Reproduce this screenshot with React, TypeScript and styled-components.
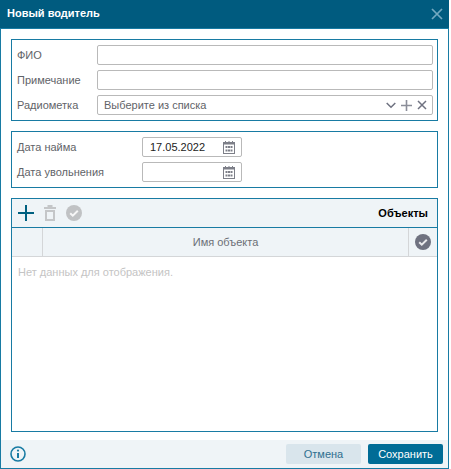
import React from "react";
import styled, { createGlobalStyle } from "styled-components";

const Global = createGlobalStyle`
  html, body {
    margin: 0;
    padding: 0;
    background: #fff;
  }
  body {
    font-family: "Liberation Sans", Arial, sans-serif;
    font-size: 11px;
  }
`;

const CalendarIcon = () => (
  <svg width="12" height="13" viewBox="0 0 12 13" fill="none">
    <rect x="0.5" y="1.5" width="11" height="11" stroke="#7d7f88" fill="#fff" />
    <rect x="0.5" y="1" width="11" height="2.5" fill="#7d7f88" />
    <path d="M2.5 0v2M6 0v2M9.5 0v2" stroke="#7d7f88" />
    <path d="M2.5 5h2v2h-2zM5 5h2v2H5zM7.5 5h2v2h-2zM2.5 8.5h2v2h-2zM5 8.5h2v2H5zM7.5 8.5h2v2h-2z" fill="#7d7f88" />
  </svg>
);

const CheckCircle = ({ color }: { color: string }) => (
  <svg width="16" height="16" viewBox="0 0 16 16">
    <circle cx="8" cy="8" r="8" fill={color} />
    <path d="M4.2 8.2l2.6 2.5 5-5" fill="none" stroke="#fff" strokeOpacity="0.85" strokeWidth="2" />
  </svg>
);

export default function App() {
  return (
    <>
      <Global />
      <Dialog>
        <Header>
          <Title>Новый водитель</Title>
          <CloseButton>
            <svg width="12" height="12" viewBox="0 0 12 12">
              <path d="M1 1l10 10M11 1L1 11" stroke="#73a9c0" strokeWidth="1.7" />
            </svg>
          </CloseButton>
        </Header>
        <Body>
          <Section>
            <Row>
              <Label $width={80}>ФИО</Label>
              <Input />
            </Row>
            <Row>
              <Label $width={80}>Примечание</Label>
              <Input />
            </Row>
            <Row>
              <Label $width={80}>Радиометка</Label>
              <Input>
                <Placeholder>Выберите из списка</Placeholder>
                <SelectIcons>
                  <svg width="10" height="10" viewBox="0 0 10 10">
                    <path d="M0.7 3l4.3 4.3L9.3 3" fill="none" stroke="#6f7280" strokeWidth="1.5" />
                  </svg>
                  <svg width="11" height="11" viewBox="0 0 11 11">
                    <path d="M5.5 0v11M0 5.5h11" stroke="#8b8e99" strokeWidth="1.6" />
                  </svg>
                  <svg width="10" height="10" viewBox="0 0 10 10">
                    <path d="M1 1l8 8M9 1l-8 8" stroke="#6f7280" strokeWidth="1.5" />
                  </svg>
                </SelectIcons>
              </Input>
            </Row>
          </Section>
          <Section>
            <Row>
              <Label $width={125}>Дата найма</Label>
              <DateInput>
                <DateValue>17.05.2022</DateValue>
                <CalendarIcon />
              </DateInput>
            </Row>
            <Row>
              <Label $width={125}>Дата увольнения</Label>
              <DateInput>
                <DateValue />
                <CalendarIcon />
              </DateInput>
            </Row>
          </Section>
          <TableSection>
            <Toolbar>
              <ToolIcons>
                <svg width="16" height="16" viewBox="0 0 16 16">
                  <path d="M8 0v16M0 8h16" stroke="#006080" strokeWidth="2" />
                </svg>
                <svg width="12" height="16" viewBox="0 0 12 16">
                  <path d="M3.5 1h5M0 3h12" stroke="#c4c6c8" strokeWidth="2" fill="none" />
                  <path d="M2 6h8v9H2z" stroke="#c4c6c8" strokeWidth="2" fill="none" />
                </svg>
                <CheckCircle color="#c0c2c4" />
              </ToolIcons>
              <ToolbarTitle>Объекты</ToolbarTitle>
            </Toolbar>
            <TableHead>
              <HeadCell $width={30} />
              <HeadTitle>Имя объекта</HeadTitle>
              <HeadCheck>
                <CheckCircle color="#6f7280" />
              </HeadCheck>
            </TableHead>
            <EmptyText>Нет данных для отображения.</EmptyText>
          </TableSection>
        </Body>
        <Footer>
          <svg width="16" height="16" viewBox="0 0 16 16">
            <circle cx="8" cy="8" r="7" fill="none" stroke="#187ba3" strokeWidth="1.6" />
            <path d="M8 7v5" stroke="#187ba3" strokeWidth="2" />
            <circle cx="8" cy="4.6" r="1.1" fill="#187ba3" />
          </svg>
          <Buttons>
            <CancelButton>Отмена</CancelButton>
            <SaveButton>Сохранить</SaveButton>
          </Buttons>
        </Footer>
      </Dialog>
    </>
  );
}

const Dialog = styled.div`
  width: 449px;
  height: 469px;
  box-sizing: border-box;
  border: 1px solid #187ba3;
  border-top: none;
  display: flex;
  flex-direction: column;
  background: #fff;
`;

const Header = styled.div`
  height: 29px;
  flex: none;
  box-sizing: border-box;
  margin: 0 -1px;
  padding: 0 6px 0 7px;
  background: #005b7f;
  border-bottom: 1px solid #187ba3;
  display: flex;
  align-items: center;
  justify-content: space-between;
`;

const Title = styled.div`
  color: #fff;
  font-size: 11px;
  font-weight: bold;
  margin-bottom: 2px;
`;

const CloseButton = styled.div`
  display: flex;
`;

const Body = styled.div`
  flex: 1;
  min-height: 0;
  padding: 10px 10px 8px 10px;
  display: flex;
  flex-direction: column;
  gap: 10px;
`;

const Section = styled.div`
  border: 1px solid #187ba3;
  padding: 5px 4px 5px 5px;
  display: flex;
  flex-direction: column;
  gap: 5px;
`;

const Row = styled.div`
  display: flex;
  align-items: center;
  height: 20px;
`;

const Label = styled.div<{ $width: number }>`
  width: ${(p) => p.$width}px;
  flex: none;
  color: #5f6368;
  font-size: 11px;
`;

const Input = styled.div`
  flex: 1;
  height: 20px;
  box-sizing: border-box;
  border: 1px solid #b9b9b9;
  border-radius: 2px;
  padding: 0 5px 0 6px;
  display: flex;
  align-items: center;
  justify-content: space-between;
`;

const Placeholder = styled.span`
  color: #5f6368;
  font-size: 11px;
`;

const SelectIcons = styled.div`
  display: flex;
  align-items: center;
  gap: 5px;
`;

const DateInput = styled.div`
  width: 100px;
  height: 20px;
  box-sizing: border-box;
  border: 1px solid #b9b9b9;
  border-radius: 2px;
  padding: 0 6px 0 7px;
  display: flex;
  align-items: center;
  justify-content: space-between;
`;

const DateValue = styled.span`
  color: #222;
  font-size: 11px;
`;

const TableSection = styled.div`
  flex: 1;
  min-height: 0;
  border: 1px solid #187ba3;
  display: flex;
  flex-direction: column;
`;

const Toolbar = styled.div`
  height: 29px;
  flex: none;
  box-sizing: border-box;
  background: #eff4f7;
  border-bottom: 1px solid #187ba3;
  padding: 0 9px 0 6px;
  display: flex;
  align-items: center;
  justify-content: space-between;
`;

const ToolIcons = styled.div`
  display: flex;
  align-items: center;
  gap: 10px;
`;

const ToolbarTitle = styled.div`
  color: #000;
  font-size: 11px;
  font-weight: bold;
`;

const TableHead = styled.div`
  height: 29px;
  flex: none;
  box-sizing: border-box;
  background: #eff4f7;
  border-bottom: 1px solid #d4d6d8;
  display: flex;
`;

const HeadCell = styled.div<{ $width: number }>`
  width: ${(p) => p.$width}px;
  flex: none;
  border-right: 1px solid #d4d6d8;
`;

const HeadTitle = styled.div`
  flex: 1;
  color: #6b6f76;
  font-size: 11px;
  display: flex;
  align-items: center;
  justify-content: center;
`;

const HeadCheck = styled.div`
  width: 29px;
  flex: none;
  box-sizing: border-box;
  border-left: 1px solid #d4d6d8;
  display: flex;
  align-items: center;
  justify-content: center;
`;

const EmptyText = styled.div`
  color: #c4c4c4;
  font-size: 11px;
  padding: 9px 6px;
`;

const Footer = styled.div`
  height: 28px;
  flex: none;
  background: #eff4f7;
  padding: 0 5px 0 9px;
  display: flex;
  align-items: center;
  justify-content: space-between;
`;

const Buttons = styled.div`
  display: flex;
  gap: 7px;
`;

const CancelButton = styled.div`
  width: 75px;
  height: 20px;
  border-radius: 2px;
  background: #d9e5ec;
  color: #2f6f8f;
  font-size: 11px;
  display: flex;
  align-items: center;
  justify-content: center;
`;

const SaveButton = styled(CancelButton)`
  background: #006c96;
  color: #fff;
`;
